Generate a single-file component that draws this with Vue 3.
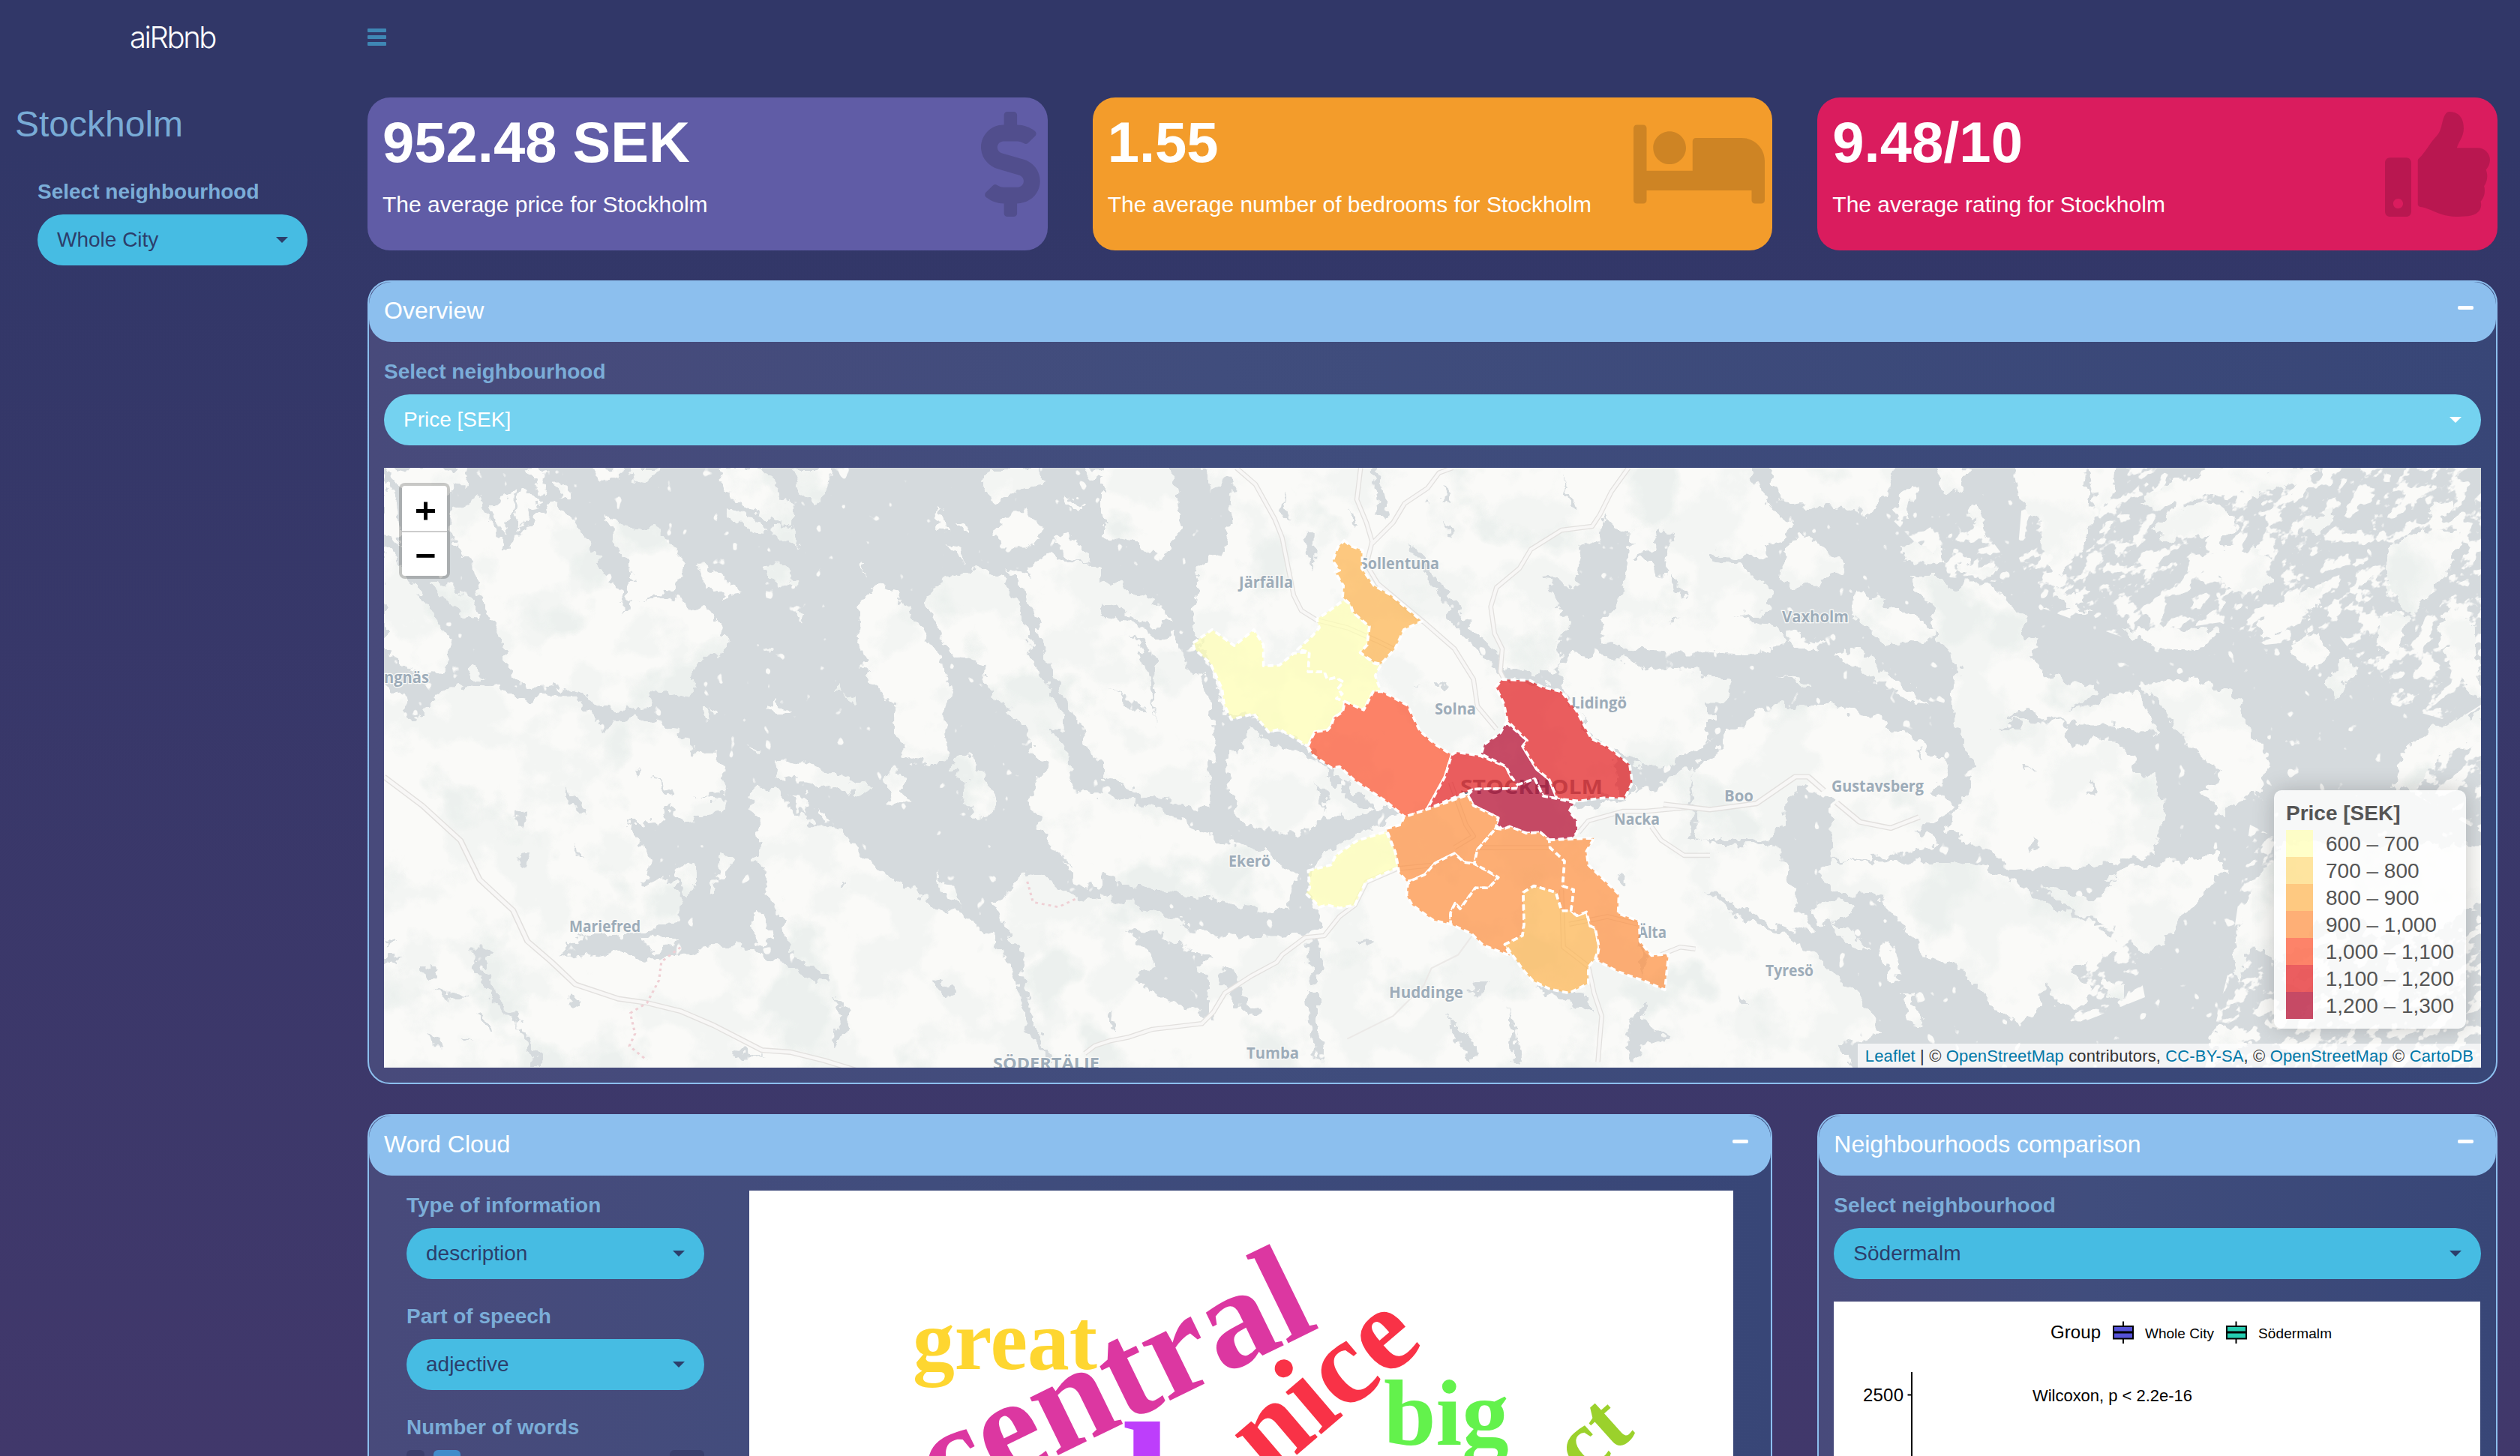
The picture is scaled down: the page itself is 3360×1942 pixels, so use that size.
<script setup>
const cards = [
  {
    value: '952.48 SEK', text: 'The average price for Stockholm', tone: 'purple', w: 288,
    icon: 'M209.2 233.4l-108-31.6C88.7 198.2 80 186.5 80 173.5c0-16.3 13.2-29.5 29.5-29.5h66.3c12.2 0 24.2 3.7 34.2 10.5 6.1 4.1 14.3 3.1 19.5-2l34.8-34c7.1-6.9 6.1-18.4-1.8-24.5C238 74.8 207.4 64.1 176 64V16c0-8.8-7.2-16-16-16h-32c-8.8 0-16 7.2-16 16v48h-2.5C45.8 64-5.4 118.7.5 183.6c4.2 46.1 39.4 83.6 83.8 96.6l102.5 30c12.5 3.7 21.2 15.3 21.2 28.3 0 16.3-13.2 29.5-29.5 29.5h-66.3C100 368 88 364.3 78 357.5c-6.1-4.1-14.3-3.1-19.5 2l-34.8 34c-7.1 6.9-6.1 18.4 1.8 24.5 24.5 19.2 55.1 29.9 86.5 30v48c0 8.8 7.2 16 16 16h32c8.8 0 16-7.2 16-16v-48.2c46.6-.9 90.3-28.6 105.7-72.7 21.5-61.6-14.6-124.8-72.5-141.7z',
  },
  {
    value: '1.55', text: 'The average number of bedrooms for Stockholm', tone: 'orange', w: 640,
    icon: 'M176 256c44.11 0 80-35.89 80-80s-35.89-80-80-80-80 35.89-80 80 35.89 80 80 80zm352-128H304c-8.84 0-16 7.16-16 16v144H64V80c0-8.84-7.16-16-16-16H16C7.16 64 0 71.16 0 80v352c0 8.84 7.16 16 16 16h32c8.84 0 16-7.16 16-16v-48h512v48c0 8.84 7.16 16 16 16h32c8.84 0 16-7.16 16-16V240c0-61.86-50.14-112-112-112z',
  },
  {
    value: '9.48/10', text: 'The average rating for Stockholm', tone: 'pink', w: 512,
    icon: 'M104 224H24c-13.255 0-24 10.745-24 24v240c0 13.255 10.745 24 24 24h80c13.255 0 24-10.745 24-24V248c0-13.255-10.745-24-24-24zM64 472c-13.255 0-24-10.745-24-24s10.745-24 24-24 24 10.745 24 24-10.745 24-24 24zM384 81.452c0 42.416-25.97 66.208-33.277 94.548h101.723c33.397 0 59.397 27.746 59.553 58.098.084 17.938-7.546 37.249-19.439 49.197l-.11.11c9.836 23.337 8.237 56.037-9.308 79.469 8.681 25.895-.069 57.704-16.382 74.757 4.298 17.598 2.244 32.575-6.148 44.632C440.202 511.587 389.616 512 346.839 512l-2.845-.001c-48.287-.017-87.806-17.598-119.56-31.725-15.957-7.099-36.821-15.887-52.651-16.178-6.54-.12-11.783-5.457-11.783-11.998v-213.77c0-3.2 1.282-6.271 3.558-8.521 39.614-39.144 56.648-80.587 89.117-113.111 14.804-14.832 20.188-37.236 25.393-58.902C282.515 39.293 291.817 0 312 0c24 0 72 8 72 81.452z',
  },
]

const ranges = [
  ['#ffffb2', '600 – 700'],
  ['#fed976', '700 – 800'],
  ['#feb24c', '800 – 900'],
  ['#fd8d3c', '900 – 1,000'],
  ['#fc4e2a', '1,000 – 1,100'],
  ['#e31a1c', '1,100 – 1,200'],
  ['#b10026', '1,200 – 1,300'],
]

// Land of the western sheet
const westLand = [
  'M50 44L222 44L218 80L195 100L160 110L85 90L60 60Z',
  'M50 70L75 130L85 230L50 200Z',
  'M50 220L95 300L150 400L187 450L180 520L150 550L100 540L50 480Z',
  'M190 150L245 110L265 160L305 245L340 200L365 160L410 130L445 165L475 220L500 280L540 340L550 395L575 370L620 355L660 365L690 385L715 370L740 405L775 468L745 500L700 520L695 545L700 580L665 600L610 590L608 620L560 635L500 620L460 590L400 572L340 575L310 540L300 500L305 480L270 420L245 330L240 280L195 235Z',
  'M515 165L560 190L620 195L670 250L680 300L655 350L610 345L580 370L550 355L580 320L550 260Z',
  'M280 130L300 120L325 95L320 150L300 200L280 170Z M335 90L375 120L350 160L335 200L325 150Z M410 90L435 80L438 115L420 118Z',
  'M480 44L545 44L535 80L500 65Z M560 44L630 44L600 90L570 70Z M340 44L390 44L380 110L365 80Z',
  'M750 80L760 44L840 44L870 90L910 150L900 185L850 165L790 130Z',
  'M905 44L985 44L980 100L950 130L915 95Z',
  'M700 275L760 305L795 345L760 365L725 330Z M850 275L880 275L915 325L880 325L850 300Z',
  'M765 135L810 155L860 200L820 195L775 165Z M865 180L905 190L920 240L900 225L865 205Z',
  'M150 320L200 330L240 370L250 420L215 400L170 360Z M220 545L240 530L258 550L230 555Z',
  'M50 570L90 590L105 660L120 660L150 610L185 580L260 570L310 580L350 610L390 590L440 595L480 640L515 690L530 660L575 645L620 660L690 705L710 740L750 740L755 790L772 835L700 845L760 850L755 885L720 890L680 900L640 870L630 905L590 910L555 910L590 960L610 1000L590 1055L640 1040L670 1080L670 1150L620 1155L590 1175L530 1180L480 1180L430 1195L430 1230L410 1240L520 1220L600 1240L680 1225L740 1205L800 1210L880 1245L950 1290L985 1300L985 1282L920 1240L890 1200L885 1150L850 1080L845 1020L820 1000L840 960L830 900L815 870L820 825L870 820L900 870L950 920L1000 920L1030 960L1100 1035L1150 1060L1200 1110L1260 1130L1320 1180L1350 1240L1380 1320L1395 1400L1430 1470L1440 1530L20 1530L20 570Z',
  'M1040 380L1075 330L1110 340L1150 395L1200 480L1235 570L1225 640L1225 740L1210 765L1155 755L1115 690L1115 620L1090 590L1055 530L1045 470Z',
  'M1220 320L1290 285L1340 310L1380 390L1405 500L1470 640L1475 680L1440 690L1475 710L1480 790L1490 830L1568 850L1600 900L1600 1070L1500 1020L1440 950L1410 900L1405 820L1440 760L1400 730L1400 680L1350 630L1310 570L1305 520L1240 500L1205 430L1180 350Z',
  'M1350 285L1400 300L1420 260L1500 270L1568 300L1600 320L1600 790L1530 740L1500 660L1450 550L1425 480L1420 410L1380 330Z',
  'M1365 150L1400 150L1430 200L1390 240L1340 240L1325 200Z M1310 44L1420 44L1430 80L1380 100L1330 130L1300 100Z M1450 200L1500 220L1530 280L1470 250Z M1500 44L1600 44L1600 70L1520 60Z M1475 110L1505 130L1505 145L1480 130Z',
  'M1200 140L1220 170L1225 205L1205 180Z M1230 225L1255 245L1265 275L1245 265Z M1250 175L1270 180L1268 205L1255 195Z',
  'M865 750L950 770L1070 825L1040 835L930 805L880 800Z M1110 770L1130 790L1150 860L1110 860L1100 800Z',
  'M1245 740L1285 750L1320 820L1330 885L1290 890L1260 850L1270 810L1240 790Z',
  'M895 840L935 845L930 890Z M955 870L990 905L970 905Z M665 1000L700 1010L705 1070L685 1090L655 1040Z M750 985L775 990L765 1040L745 1035L740 1080L730 1080L735 1045L750 1030Z',
  'M820 1120L850 1135L865 1190L840 1205L820 1170Z M850 620L870 605L900 640L860 640Z M1205 1030L1235 1060L1250 1110L1215 1075Z M590 1185L640 1185L670 1205L610 1220Z',
  'M715 635L728 635L728 655L716 652Z M735 632L748 640L740 650Z M1000 560L1008 590L995 595Z M1015 590L1035 615L1025 620Z M905 390L930 400L925 420L908 410Z M845 484L865 486L860 494L846 492Z M810 712L835 728L828 735Z M1045 275L1055 275L1055 300Z',
  'M1390 1030L1430 1040L1460 1070L1510 1090L1600 1095L1600 1530L1460 1530L1410 1400L1385 1290L1390 1230L1340 1150L1330 1110Z',
  'M1470 1000L1520 1020L1600 1050L1600 1080L1500 1060Z',
]
const westLakes = 'M325 885L355 880L340 915L325 915Z M325 980L355 985L350 1020L330 1015Z M435 815L450 840L475 890L460 885L440 850Z M445 945L460 985L450 980Z M230 1215L275 1215L260 1260L290 1330L345 1410L385 1501L370 1501L330 1400L270 1330L245 1270Z M120 1255L165 1265L155 1280L125 1270Z M150 1310L225 1330L190 1338Z M1195 1295L1220 1290L1252 1325L1220 1330Z M985 1330L1025 1365L1010 1420L995 1452L988 1430L1008 1380Z M440 1325L465 1340L460 1355L440 1352Z M240 1370L280 1400L275 1415L250 1390Z M150 1410L175 1450L155 1450Z M205 1435L235 1440L210 1445Z M605 795L655 830L650 840Z M575 780L592 785L580 795Z M1010 1048L1018 1050L1016 1064L1010 1062Z M780 1460L845 1468L790 1475Z M50 1190L80 1195L50 1205Z M50 1235L95 1230L70 1250L50 1245Z'

// Lakes and bays of the central sheet
const centreWater = [
  'M150 20L240 20L270 110L300 80L325 80L320 180L300 260L260 280L230 330L215 440L235 520L265 570L300 690L330 700L380 690L420 735L460 735L520 775L600 860L700 940L620 920L580 860L520 800L430 770L360 730L350 780L310 800L305 870L330 900L320 950L400 1000L450 1000L500 1010L560 960L650 960L720 920L760 950L700 985L650 1000L600 1040L545 1060L520 1130L530 1180L550 1250L480 1270L400 1272L300 1274L180 1235L100 1200L-20 1170L-20 1110L100 1150L250 1170L400 1210L460 1200L490 1110L430 1070L380 1040L290 1020L200 975L130 940L-20 895L-20 860L100 900L230 940L260 930L255 850L280 780L270 720L240 590L180 540L170 480L130 500L60 450L-20 430L-20 400L60 430L110 460L155 450L130 400L60 370L-20 340L-20 230L70 240L130 290L160 260L185 200L180 130Z',
  'M520 1280L545 1290L558 1400L525 1400Z M510 1415L545 1420L545 1500L560 1600L540 1600L515 1480Z M40 1245L120 1260L180 1300L280 1330L230 1350L262 1410L260 1480L180 1450L80 1400L75 1365L125 1345Z M0 1460L30 1530L0 1500Z M285 1350L330 1370L340 1430L400 1470L360 1480L310 1430Z',
  'M770 240L830 290L890 390L960 480L1030 560L1130 590L1180 560L1170 500L1200 470L1170 400L1130 330L1180 340L1210 370L1230 260L1280 240L1290 170L1330 210L1360 220L1350 330L1330 400L1270 480L1350 520L1450 530L1600 530L1600 590L1440 575L1300 540L1200 530L1170 580L1180 620L1230 700L1270 760L1340 800L1400 830L1500 810L1600 740L1600 780L1500 840L1420 890L1370 880L1350 915L1220 940L1210 915L1330 900L1310 780L1240 730L1200 640L1120 615L1020 590L960 520L900 460L850 360L800 290Z',
  'M1370 290L1420 260L1440 210L1480 220L1460 260L1445 335L1420 290Z M1460 330L1510 385L1505 390L1465 355Z',
  'M680 20L700 50L730 180L700 170Z M1188 60L1200 110L1222 160L1200 150Z M868 88L890 140L862 130Z M878 175L897 240L880 220Z M515 215L535 220L530 320L515 270Z M455 115L468 180L445 160Z M60 480L110 530L120 620L118 720L108 600Z M0 630L85 670L85 690Z M630 155L648 205L632 200Z M815 138L830 135L828 148Z M795 618L815 618L800 622Z M850 610L885 620L860 624Z M1455 440L1490 443L1460 447Z',
  'M870 1470L965 1560L945 1600Z M1040 1450L1075 1600L1050 1600Z M1390 1440L1410 1510L1460 1530L1400 1550L1370 1600L1345 1560Z M935 1415L990 1380L970 1430Z M1520 830L1530 900L1535 1000L1530 1030L1600 1025L1600 1040L1510 1020L1520 940Z M640 1280L695 1285L660 1300Z M1110 1400L1250 1430L1270 1470L1150 1430Z M1390 1290L1405 1310L1392 1370L1385 1340Z M540 870L565 900L560 950L548 900Z M1330 1110L1360 1125L1340 1140Z',
]

// Land of the eastern sheet
const eastLand = [
  'M-20 20L70 20L100 110L155 180L150 210L110 230L115 260L60 262L-20 240Z M-20 265L60 280L115 340L120 395L50 400L140 440L145 480L60 500L-20 490Z',
  'M105 20L365 20L345 110L310 155L240 140L190 135L140 130Z M180 200L215 230L260 280L235 310L180 335L135 320L140 240Z M-20 555L45 560L40 615L-20 615Z',
  'M285 340L340 370L430 430L430 465L370 475L310 450L280 400Z M230 500L290 480L340 540L400 590L415 625L360 590L280 530Z M150 440L225 470L210 490L150 470Z M130 545L200 570L190 578Z',
  'M-20 720L60 670L100 630L160 620L240 620L330 660L380 690L460 760L455 800L430 830L475 870L400 920L440 960L350 990L240 995L230 940L240 850L200 830L170 810L150 850L140 920L100 950L-20 950Z',
  'M385 310L440 310L460 340L520 320L570 350L610 410L600 470L640 460L620 510L660 550L745 580L740 600L690 630L760 620L770 590L830 590L870 690L780 670L720 670L600 630L580 650L610 660L690 665L695 710L760 700L820 740L835 800L860 790L880 880L860 980L780 1005L660 1020L580 1015L540 970L460 930L480 880L490 840L515 770L490 710L475 650L470 560L490 540L460 490L430 440L430 390Z',
  'M830 570L930 555L1020 600L1040 680L1080 740L1070 820L990 890L950 830L990 800L940 730L900 680L880 620Z',
  'M210 1020L260 995L380 1005L460 1005L540 1020L600 1060L640 1100L740 1150L810 1220L750 1230L700 1270L650 1300L640 1350L600 1400L560 1370L520 1310L480 1250L420 1230L370 1150L330 1090L250 1080L210 1040Z',
  'M640 1060L720 1090L760 1060L790 1020L850 1010L980 985L1000 1020L940 1100L890 1180L850 1230L780 1160L700 1120Z',
  'M-20 960L30 965L130 960L150 1020L170 1120L200 1170L130 1160L60 1110L-20 1060Z M-20 1060L60 1140L150 1180L230 1260L290 1330L330 1420L250 1440L290 1530L-20 1530Z',
  'M190 1120L250 1090L280 1120L230 1160Z M650 1290L700 1270L740 1310L720 1360L670 1350Z M330 1190L360 1230L370 1300L345 1280Z M230 1160L270 1160L310 1220L280 1210Z M370 1320L400 1350L410 1400L380 1390Z',
  'M585 20L720 20L740 180L720 230L680 310L655 270L640 190L600 120Z M730 20L790 20L780 110L750 160Z M860 190L900 140L960 130L1020 160L1020 200L960 210L880 220Z',
  'M1310 250L1350 210L1400 195L1460 190L1440 260L1420 310L1360 400L1310 340Z M1300 400L1350 400L1330 500L1290 480Z M1410 400L1440 385L1480 430L1490 600L1450 560L1425 500Z',
  'M830 130L880 90L950 60L1000 44L1180 44L1150 75L1050 110L960 100L880 140Z M1150 180L1200 140L1210 170L1170 210Z M1390 140L1440 125L1440 150L1400 165Z',
  'M1340 740L1400 680L1500 630L1500 700L1400 760L1370 830L1320 820Z M1020 1300L1010 1230L1030 1120L1060 1040L1110 960L1500 960L1500 1100L1350 1190L1200 1120L1100 1250L1050 1200Z',
  'M800 440L880 430L990 440L940 490L860 480Z M505 140L520 130L535 215L515 190Z M360 150L375 90L405 90L370 180Z M440 44L500 44L485 110L455 100Z M960 1430L1000 1400L1040 1450L980 1470Z M760 1290L800 1290L800 1340L760 1320Z M665 340L700 345L735 400L700 390Z M370 230L450 240L460 280L380 270Z M470 265L550 295L540 310L480 290Z',
  'M930 250L1000 240L1080 250L1090 330L1020 350L980 300L930 300Z M1060 420L1120 350L1190 330L1180 380L1120 430L1070 460Z M1120 480L1180 440L1200 500L1160 540Z M1190 560L1230 500L1250 540L1210 610Z',
]
const eastLakes = 'M695 700L735 690L730 715L700 720Z M550 680L590 655L610 680L570 680Z M715 1075L785 1040L770 1080L730 1095Z M740 805L745 840L730 840Z M605 765L630 775L612 776Z M60 1320L75 1350L60 1350Z M400 735L410 745L402 748Z M625 940L640 965L620 985Z'

const roads = {
  west: 'M50 795L130 865L210 950L250 1045L320 1120L350 1195L400 1245L450 1300L540 1335L600 1345L670 1365L740 1400L840 1460L900 1465L970 1485L1040 1510',
  centre: 'M-66 1578L-40 1558L0 1545L50 1535L110 1515L240 1500L270 1470L300 1420L370 1375L435 1340L450 1320L510 1275L560 1270L600 1220L640 1190L670 1130L750 1095L850 1085 M330 47L380 90L430 180L450 230L480 380L500 420L540 445L620 465L700 500L740 520 M655 47L645 130L670 190L685 240L670 300L700 350L820 450L900 520L950 600L960 670L1010 730 M895 47L860 60L830 100L770 140L740 190L685 245 M1355 47L1310 110L1280 170L1260 200L1180 210L1100 260L1070 310L1010 360L995 410L1005 480L1025 520L1020 580L1030 600 M1225 1000L1250 970L1340 945L1400 945L1510 935 M1415 985L1440 1020L1500 1060L1568 1060 M1180 1150L1185 1300L1250 1350L1265 1420L1285 1480L1275 1600 M1200 1240L1300 1220L1380 1240 M1440 1320L1490 1300L1530 1305 M890 870L930 980L950 1010L900 1040 M960 1040L1150 1040',
  east: 'M-90 862L0 875L90 860L165 795L190 795L220 828 M245 858L290 905L350 920L405 893',
  minor: 'M950 1265L910 1320L840 1355L820 1400L740 1480L620 1540',
}

const districts = [
  [0, 'M217 505L267 470L325 512L376 470L401 510L401 565L443 563L480 532L521 528L518 580L560 580L568 600L590 595L610 607L595 625L607 638L592 650L614 658L608 685L585 700L578 722L568 733L535 737L517 775L443 730L415 738L376 690L317 705L298 665L293 625L262 558L220 520Z'],
  [0, 'M612 392L629 405L635 425L678 462L672 510L654 530L690 558L708 562L693 590L708 632L688 632L663 680L625 668L614 658L592 650L607 638L595 625L610 607L590 595L568 600L560 580L518 580L521 528L490 522L530 485L547 465L540 442L560 430Z'],
  [2, 'M612 237L630 252L660 262L658 310L690 355L735 380L815 448L768 470L745 520L708 560L690 556L654 530L672 510L678 462L635 425L629 405L608 385L610 355L588 320L600 315L582 290L595 255Z'],
  [4, 'M517 775L535 737L568 733L578 722L585 700L608 685L614 658L663 680L688 632L712 632L778 668L810 735L850 770L893 797L875 855L828 940L771 960L720 918L640 865L600 828L580 832L530 798Z'],
  [5, 'M893 797L905 790L968 800L1035 828L1048 855L1067 870L1065 885L950 887L828 940L875 855Z'],
  [6, 'M1036 712L1090 760L1078 775L1115 835L1148 862L1168 912L1132 905L1110 860L1067 878L1045 850L1035 828L970 795L978 770L1020 740Z'],
  [5, 'M1008 620L1025 600L1098 603L1130 620L1180 632L1218 680L1258 755L1300 775L1358 822L1365 870L1345 912L1290 910L1225 918L1168 912L1148 862L1115 835L1078 775L1090 760L1038 708L1030 665Z'],
  [6, 'M935 902L950 887L1065 885L1067 875L1110 860L1132 905L1168 912L1213 922L1200 945L1221 970L1221 1000L1208 1015L1148 1020L1125 1000L1088 1002L1045 985L1025 992L1010 978L1015 962L950 930Z'],
  [3, 'M722 990L760 980L768 960L828 940L935 902L950 930L1015 962L1008 990L960 1045L952 1082L925 1078L900 1055L850 1080L823 1110L790 1125L775 1128L755 1105L748 1060Z'],
  [0, 'M518 1100L578 1085L590 1060L645 1022L722 998L745 1050L752 1092L668 1130L640 1190L600 1198L568 1190L548 1195L512 1160L522 1145Z'],
  [3, 'M790 1125L823 1110L850 1080L900 1055L925 1078L952 1082L985 1100L1015 1118L990 1145L955 1145L915 1200L902 1185L890 1210L890 1240L845 1230L790 1190L775 1165L778 1135Z'],
  [3, 'M1008 990L1025 992L1045 985L1088 1002L1125 1000L1148 1020L1150 1040L1172 1060L1188 1075L1183 1140L1212 1150L1205 1205L1180 1205L1165 1157L1108 1140L1080 1157L1082 1240L1078 1270L1032 1293L1045 1322L975 1295L945 1265L890 1240L890 1210L902 1185L915 1200L955 1145L990 1145L1015 1118L985 1100L952 1082L960 1045Z'],
  [2, 'M1080 1157L1108 1140L1165 1157L1180 1205L1205 1205L1220 1218L1245 1208L1255 1245L1268 1250L1278 1300L1268 1330L1250 1352L1250 1395L1200 1420L1150 1410L1105 1388L1080 1360L1032 1293L1078 1270L1082 1240Z'],
  [3, 'M1148 1020L1265 1015L1245 1050L1250 1085L1330 1162L1328 1212L1383 1232L1385 1285L1415 1322L1460 1318L1450 1412L1400 1390L1330 1365L1272 1335L1278 1300L1268 1250L1255 1245L1245 1208L1220 1218L1205 1205L1212 1150L1183 1140L1188 1075L1172 1060L1150 1040Z'],
]

const places = [
  ['Järfälla', 1652, 784, 72], ['Sollentuna', 1813, 759, 106], ['Solna', 1913, 953, 55],
  ['Lidingö', 2095, 945, 74], ['Nacka', 2152, 1100, 61], ['Älta', 2184, 1251, 38],
  ['Ekerö', 1638, 1156, 56], ['Huddinge', 1852, 1331, 99], ['Tumba', 1662, 1412, 70],
  ['Mariefred', 759, 1243, 95], ['ngnäs', 512, 911, 60], ['Vaxholm', 2376, 830, 89],
  ['Boo', 2299, 1069, 39], ['Gustavsberg', 2442, 1056, 123], ['Tyresö', 2354, 1302, 64],
]

const west = 'translate(480 600) scale(.6378 .5484)'
const centre = 'translate(1480 600) scale(.5102)'
const east = 'translate(2280 600) scale(.6888 .5484)'
</script>

<template>
  <div class="page">
    <aside class="side">
      <div class="brand">aiRbnb</div>
      <h2>Stockholm</h2>
      <div class="side-field">
        <label>Select neighbourhood</label>
        <div class="select">Whole City<i class="caret"></i></div>
      </div>
    </aside>

    <div class="main">
      <header>
        <div class="burger"><i></i><i></i><i></i></div>
      </header>

      <section class="grid">
        <div v-for="c in cards" :key="c.value" class="card" :class="c.tone">
          <h3>{{ c.value }}</h3>
          <p>{{ c.text }}</p>
          <svg class="card-icon" :viewBox="`0 0 ${c.w} 512`" height="140"><path :d="c.icon" /></svg>
        </div>

        <div class="box full">
          <div class="box-head"><span>Overview</span><i class="minus"></i></div>
          <div class="box-body">
            <label>Select neighbourhood</label>
            <div class="select light">Price [SEK]<i class="caret"></i></div>
            <div class="map">
              <svg class="tiles" viewBox="512 624 2796 800" width="2796" height="800">
                <defs>
                  <filter id="coast" filterUnits="userSpaceOnUse" x="460" y="580" width="2900" height="900" color-interpolation-filters="sRGB">
                    <feTurbulence type="fractalNoise" baseFrequency=".06" numOctaves="3" seed="4" result="n" />
                    <feDisplacementMap in="SourceGraphic" in2="n" scale="24" xChannelSelector="R" yChannelSelector="G" result="land" />
                    <feTurbulence type="fractalNoise" baseFrequency=".012" numOctaves="5" seed="11" />
                    <feColorMatrix values="0 0 0 0 .953  0 0 0 0 .961  0 0 0 0 .953  9 0 0 0 -4.4" result="wood" />
                    <feComposite in="wood" in2="land" operator="in" result="woods" />
                    <feTurbulence type="fractalNoise" baseFrequency=".008" numOctaves="5" seed="23" />
                    <feColorMatrix values="0 0 0 0 .925  0 0 0 0 .943  0 0 0 0 .933  0 9 0 0 -5.6" />
                    <feComposite in2="land" operator="in" result="forest" />
                    <feMerge><feMergeNode in="land" /><feMergeNode in="woods" /><feMergeNode in="forest" /></feMerge>
                  </filter>
                  <filter id="skerries" filterUnits="userSpaceOnUse" x="2200" y="400" width="1700" height="2400" color-interpolation-filters="sRGB">
                    <feTurbulence type="fractalNoise" baseFrequency=".035 .055" numOctaves="4" seed="8" />
                    <feColorMatrix values="0 0 0 0 .98  0 0 0 0 .98  0 0 0 0 .973  18 0 0 0 -9.5" />
                  </filter>
                  <filter id="islets" filterUnits="userSpaceOnUse" x="460" y="580" width="2900" height="900" color-interpolation-filters="sRGB">
                    <feTurbulence type="fractalNoise" baseFrequency=".06 .05" numOctaves="2" seed="31" />
                    <feColorMatrix values="0 0 0 0 .98  0 0 0 0 .98  0 0 0 0 .973  20 0 0 0 -14.6" />
                  </filter>
                  <clipPath id="archipelago">
                    <path d="M2700 624L3308 624L3308 900L3260 960L3190 940L3120 850L3020 860L2960 830L2830 850L2720 810L2690 740Z M3230 990L3308 940L3308 1110L3220 1060Z M3000 1100L3060 1130L3308 1180L3308 1424L2940 1424L2970 1300Z M2740 1240L2840 1230L2860 1330L2760 1370Z M2520 690L2640 700L2700 780L2600 770Z" />
                  </clipPath>
                  <mask id="landmass" maskUnits="userSpaceOnUse" x="460" y="580" width="2900" height="900">
                    <g :transform="west">
                      <path v-for="d in westLand" :key="d" :d="d" fill="#fff" />
                      <path :d="westLakes" fill="#000" />
                    </g>
                    <g :transform="east">
                      <path v-for="d in eastLand" :key="d" :d="d" fill="#fff" />
                      <path :d="eastLakes" fill="#000" />
                    </g>
                    <rect x="1470" y="590" width="810" height="870" fill="#fff" />
                    <g :transform="centre"><path v-for="d in centreWater" :key="d" :d="d" fill="#000" /></g>
                  </mask>
                </defs>

                <rect x="512" y="624" width="2796" height="800" fill="#d5dadd" />
                <rect x="512" y="624" width="2796" height="800" filter="url(#islets)" />
                <g clip-path="url(#archipelago)">
                  <g transform="rotate(-34 2900 900)"><rect x="2200" y="400" width="1700" height="2400" filter="url(#skerries)" /></g>
                </g>
                <g filter="url(#coast)">
                  <rect x="470" y="590" width="2880" height="880" fill="#fafaf8" mask="url(#landmass)" />
                </g>

                <g fill="none" stroke-linejoin="round">
                  <g :transform="west"><path :d="roads.west" class="edge" /><path :d="roads.west" class="core" /></g>
                  <g :transform="centre"><path :d="roads.centre" class="edge" /><path :d="roads.centre" class="core" /><path :d="roads.minor" class="minor" /></g>
                  <g :transform="east"><path :d="roads.east" class="edge" /><path :d="roads.east" class="core" /></g>
                  <path :transform="west" class="trail" d="M1395 1050L1407 1100L1460 1112L1500 1090 M670 1210L630 1245L625 1290L600 1345L565 1370L575 1420L563 1450L600 1485" />
                </g>

                <g class="places">
                  <text v-for="p in places" :key="p[0]" :x="p[1]" :y="p[2]" :textLength="p[3]" lengthAdjust="spacingAndGlyphs">{{ p[0] }}</text>
                  <text class="city" x="1324" y="1426" textLength="142" lengthAdjust="spacingAndGlyphs">SÖDERTÄLJE</text>
                  <text class="capital" x="1947" y="1059" textLength="190" lengthAdjust="spacingAndGlyphs">STOCKHOLM</text>
                </g>

                <g :transform="centre" class="districts">
                  <path v-for="(d, i) in districts" :key="i" :d="d[1]" :fill="ranges[d[0]][0]" />
                </g>
              </svg>

              <div class="zoom">
                <svg viewBox="0 0 60 60"><path d="M19 33.500h25M31.500 21.500v24" /></svg>
                <svg viewBox="0 0 60 60"><path d="M19 32.500h25" /></svg>
              </div>
              <div class="legend">
                <strong>Price [SEK]</strong>
                <div v-for="r in ranges" :key="r[1]" class="range">
                  <i :style="{ background: r[0] }"></i><span>{{ r[1] }}</span>
                </div>
              </div>
              <div class="credits"><a>Leaflet</a> | © <a>OpenStreetMap</a> contributors, <a>CC-BY-SA</a>, © <a>OpenStreetMap</a> © <a>CartoDB</a></div>
            </div>
          </div>
        </div>

        <div class="box wide">
          <div class="box-head"><span>Word Cloud</span><i class="minus"></i></div>
          <div class="box-body cloud-row">
            <div class="filters">
              <label>Type of information</label>
              <div class="select">description<i class="caret"></i></div>
              <label>Part of speech</label>
              <div class="select">adjective<i class="caret"></i></div>
              <label>Number of words</label>
              <div class="slider"><span>1</span><span class="now">30</span><span class="max">100</span></div>
            </div>
            <div class="cloud">
              <svg viewBox="1000 1588 1312 354" width="1312" height="354">
                <text x="1218" y="1826" font-size="114" textLength="246" lengthAdjust="spacingAndGlyphs" fill="#fed630">great</text>
                <text transform="translate(1258 2016) rotate(-26)" font-size="187" fill="#dc37a1">central</text>
                <text transform="translate(1692 1973) rotate(-40.500)" font-size="160" fill="#f93247">nice</text>
                <text x="1846" y="1927" font-size="125" fill="#63f24c">big</text>
                <text x="1495" y="2070" font-size="250" fill="#bd3efb">l</text>
                <text transform="translate(2114 1974) rotate(-42)" font-size="119" fill="#9bd12c">ct</text>
              </svg>
            </div>
          </div>
        </div>

        <div class="box">
          <div class="box-head"><span>Neighbourhoods comparison</span><i class="minus"></i></div>
          <div class="box-body">
            <label>Select neighbourhood</label>
            <div class="select">Södermalm<i class="caret"></i></div>
            <div class="plot">
              <svg viewBox="2446 1736 862 206" width="862" height="206">
                <text x="2735" y="1785" font-size="24" textLength="67">Group</text>
                <g stroke="#000" stroke-width="2">
                  <path d="M2832 1762.500V1792M2982.500 1762.500V1792" />
                  <rect x="2819" y="1769" width="26" height="16.500" fill="#5552d8" />
                  <rect x="2970" y="1769" width="26" height="16.500" fill="#25ccb0" />
                  <path d="M2819 1777H2845M2970 1777H2996" stroke-width="2.800" />
                  <path d="M2550 1830V1942M2544.500 1860.500H2550" />
                </g>
                <text x="2861" y="1785" font-size="19" textLength="92">Whole City</text>
                <text x="3012" y="1785" font-size="19" textLength="98">Södermalm</text>
                <text x="2485" y="1868.500" font-size="24" textLength="54">2500</text>
                <text x="2711" y="1868.500" font-size="22" textLength="213">Wilcoxon, p &lt; 2.2e-16</text>
              </svg>
            </div>
          </div>
        </div>
      </section>
    </div>
  </div>
</template>

<style>
body { margin: 0; overflow: hidden; }
</style>

<style scoped>
* { box-sizing: border-box; }
.page {
  display: flex;
  width: 3360px;
  height: 1942px;
  overflow: hidden;
  font-family: "Liberation Sans", Arial, sans-serif;
  font-size: 28px;
  color: #fff;
  background: linear-gradient(#313768 0, #313768 10%, #41386b 100%);
}
.side { width: 460px; flex: none; }
.brand {
  height: 100px;
  line-height: 99px;
  text-align: center;
  font-family: Inter, "Liberation Sans", sans-serif;
  font-size: 40px;
  font-weight: 300;
  letter-spacing: -2.4px;
}
h2 { margin: 38px 0 0 20px; font-size: 48px; font-weight: 400; line-height: 55px; color: #79abd6; }
.side-field { padding: 43px 50px 0; }
label { display: block; height: 40px; line-height: 40px; margin-bottom: 10px; font-weight: 700; color: #7badd8; }
.select {
  display: flex;
  align-items: center;
  justify-content: space-between;
  height: 68px;
  margin-bottom: 30px;
  padding: 0 26px;
  border-radius: 34px;
  background: #46bce3;
  color: #2c3e6b;
}
.select.light { background: #74d2f0; color: #fff; }
.caret { border: 8px solid transparent; border-top-color: currentColor; border-bottom: 0; }

.main { flex: 1; padding: 0 30px; }
header { height: 100px; padding-top: 38px; }
.burger { display: flex; flex-direction: column; gap: 4px; width: 25px; }
.burger i { height: 5px; border-radius: 1px; background: #3f87b5; }
.grid { display: grid; grid-template-columns: repeat(3, 1fr); column-gap: 60px; row-gap: 40px; padding-top: 30px; }

.card { position: relative; height: 204px; padding: 20px; border-radius: 30px; }
.card h3 { margin: 0 0 22px; font-size: 76px; line-height: 80px; white-space: nowrap; }
.card p { margin: 0; font-size: 30px; line-height: 42px; }
.card-icon { position: absolute; top: 19px; right: 10px; fill: rgba(0, 0, 0, .15); }
.purple { background: #605ca6; }
.orange { background: #f39c2b; }
.pink { background: #da1c5e; }

.box {
  min-width: 0;
  border: 2px solid #8cbfee;
  border-radius: 30px;
  background: linear-gradient(to right, #484a7b, #404d7d 40%, #384677);
}
.full { grid-column: 1 / 4; height: 1072px; }
.wide { grid-column: 1 / 3; }
.wide, .wide + .box { height: 600px; }
.box-head {
  display: flex;
  justify-content: space-between;
  height: 80px;
  padding: 0 30px 0 20px;
  border-radius: 30px;
  background: #8cbfee;
  font-size: 32px;
  line-height: 77px;
}
.minus { width: 21px; height: 5px; margin-top: 32px; border-radius: 2px; background: #fff; }
.box-body { padding: 20px; }

.map { position: relative; height: 800px; overflow: hidden; }
.tiles { display: block; }
.edge { stroke: #e2e0de; stroke-width: 13px; }
.core { stroke: #f8f7f6; stroke-width: 8px; }
.minor { stroke: #ebe9e7; stroke-width: 4px; }
.trail { stroke: #efcfd4; stroke-width: 5px; stroke-dasharray: 6 8; }
.places text {
  font-family: "Open Sans", "Noto Sans", sans-serif;
  font-weight: 700;
  font-size: 21px;
  fill: #9dacb9;
  stroke: #fafaf8;
  stroke-width: 2.5px;
  paint-order: stroke;
}
.places .city { font-size: 22px; }
.places .capital { font-size: 26px; fill: #7f8c99; stroke: none; }
.districts path {
  fill-opacity: .7;
  stroke: #fff;
  stroke-width: 7px;
  stroke-dasharray: 15 9;
  stroke-linejoin: round;
}
.zoom {
  position: absolute;
  left: 20px;
  top: 20px;
  width: 68px;
  border: 4px solid rgba(0, 0, 0, .2);
  background: #fff;
  background-clip: padding-box;
  border-radius: 8px;
}
.zoom svg { display: block; width: 60px; height: 60px; stroke: #000; stroke-width: 5px; fill: none; }
.zoom svg + svg { border-top: 2px solid #ccc; }
.legend {
  position: absolute;
  right: 20px;
  bottom: 52px;
  width: 256px;
  height: 318px;
  padding: 12px 16px;
  border-radius: 10px;
  background: rgba(255, 255, 255, .8);
  box-shadow: 0 0 30px rgba(0, 0, 0, .2);
  color: #555;
}
.legend strong { display: block; height: 41px; line-height: 38px; }
.range { display: flex; gap: 17px; height: 36px; line-height: 37px; white-space: nowrap; }
.range i { width: 36px; opacity: .7; }
.credits {
  position: absolute;
  right: 0;
  bottom: 0;
  height: 32px;
  padding: 0 10px;
  font-size: 22px;
  line-height: 33px;
  letter-spacing: .14px;
  color: #333;
  background: rgba(255, 255, 255, .7);
  white-space: nowrap;
}
.credits a { color: #0078a8; }

.cloud-row { display: flex; }
.filters { width: 25%; padding: 0 30px; }
.slider { display: flex; gap: 12px; font-size: 20px; line-height: 24px; height: 30px; }
.slider span { min-width: 24px; height: 28px; padding: 3px 6px; border-radius: 6px; text-align: center; background: rgba(40, 40, 80, .35); color: #2c2f55; }
.slider .now { min-width: 36px; background: #428bca; color: #7fb4e0; }
.slider .max { min-width: 46px; margin-left: auto; }
.cloud { width: 75%; padding: 0 30px; }
.cloud svg { display: block; width: 100%; background: #fff; }
.cloud text { font-family: "Liberation Serif", "Times New Roman", serif; font-weight: 700; }
.plot svg { display: block; background: #fff; }
.plot text { fill: #000; }
</style>
